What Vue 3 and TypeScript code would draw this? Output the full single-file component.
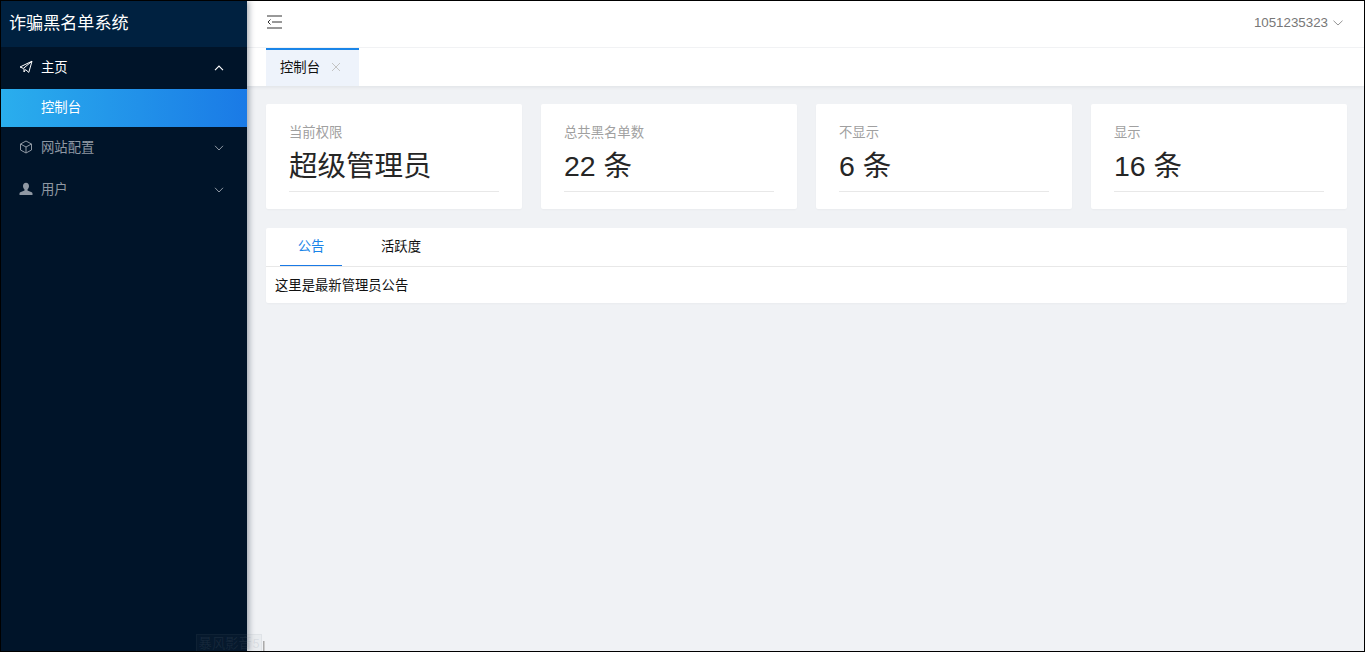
<script setup lang="ts">
const stats = [
  { label: '当前权限', value: '超级管理员' },
  { label: '总共黑名单数', value: '22 条' },
  { label: '不显示', value: '6 条' },
  { label: '显示', value: '16 条' },
]
</script>

<template>
  <div class="app">
    <aside class="side">
      <div class="logo">诈骗黑名单系统</div>
      <div class="item on">
        <svg class="ico" viewBox="0 0 14 14" fill="none" stroke="currentColor" stroke-width="1"><path d="M13 1.2 1 7l3.4 1.4L13 1.2 9.8 12.4 6.5 9.6 5 12V8.6" stroke-linejoin="round" /></svg>
        <span>主页</span>
        <svg class="arrow" viewBox="0 0 10 6" fill="none" stroke="currentColor" stroke-width="1.1"><path d="M1 5.2 5 1l4 4.2" /></svg>
      </div>
      <div class="sub">控制台</div>
      <div class="item">
        <svg class="ico" viewBox="0 0 14 14" fill="none" stroke="currentColor" stroke-width="1"><path d="M7 1 12.5 4v6L7 13 1.5 10V4ZM1.5 4 7 7l5.5-3M7 7v6" stroke-linejoin="round" /></svg>
        <span>网站配置</span>
        <svg class="arrow" viewBox="0 0 10 6" fill="none" stroke="currentColor" stroke-width="1"><path d="M1 .8 5 5l4-4.2" /></svg>
      </div>
      <div class="item">
        <svg class="ico" viewBox="0 0 14 14" fill="currentColor"><path d="M7 .8c1.900 0 3 1.400 3 3.200 0 1.500-.7 2.800-1.500 3.400v1.200l4.200 1.700c.5.200.8.600.8 1.100V13H.5v-1.600c0-.5.300-.9.800-1.100l4.200-1.700V7.400C4.700 6.800 4 5.500 4 4c0-1.800 1.100-3.200 3-3.200Z" /></svg>
        <span>用户</span>
        <svg class="arrow" viewBox="0 0 10 6" fill="none" stroke="currentColor" stroke-width="1"><path d="M1 .8 5 5l4-4.2" /></svg>
      </div>
    </aside>
    <main class="main">
      <header class="top">
        <div class="head">
          <svg class="fold" viewBox="0 0 15 14" fill="none" stroke="#333" stroke-width="1"><path d="M0 1h15M5 7h10M0 13h15M3.500 4.500 1 7l2.500 2.500" /></svg>
          <div class="user">
            <span>1051235323</span>
            <svg class="caret" viewBox="0 0 10 6" fill="none" stroke="#888" stroke-width=".9"><path d="M.5.700 5 5 9.500.7" /></svg>
          </div>
        </div>
        <div class="tabs">
          <div class="tab">
            <span>控制台</span>
            <svg class="close" viewBox="0 0 10 10" fill="none" stroke="#c4c4c4" stroke-width="1"><path d="m1 1 8 8M9 1 1 9" /></svg>
          </div>
        </div>
      </header>
      <section class="content">
        <div class="cards">
          <div v-for="s in stats" :key="s.label" class="card">
            <div class="label">{{ s.label }}</div>
            <div class="value">{{ s.value }}</div>
          </div>
        </div>
        <div class="panel">
          <div class="ptabs">
            <div class="ptab active">公告</div>
            <div class="ptab">活跃度</div>
          </div>
          <div class="pbody">这里是最新管理员公告</div>
        </div>
      </section>
    </main>
    <div class="mark">暴风影音5</div>
    <div class="tick"></div>
  </div>
</template>

<style>
html, body { margin: 0; background: #f0f2f5; }
</style>

<style scoped>
.app {
  position: relative;
  box-sizing: border-box;
  width: 1365px;
  height: 652px;
  border: 1px solid #000;
  display: flex;
  overflow: hidden;
  background: #f0f2f5;
  font-family: Roboto, "Noto Sans CJK SC", sans-serif;
  font-size: 13.33px;
}
.side {
  width: 246px;
  flex: none;
  background: #001429;
  position: relative;
  z-index: 2;
  box-shadow: 2px 0 6px rgba(0, 21, 41, 0.35);
}
.logo {
  height: 46px;
  line-height: 44px;
  padding-left: 8px;
  background: #002140;
  color: #fff;
  font-size: 17.1px;
}
.item {
  height: 42px;
  display: flex;
  align-items: center;
  padding-left: 18px;
  color: #8f98a3;
}
.item.on { color: #fff; }
.item span { margin-left: 8px; padding-bottom: 4px; }
.ico { width: 14px; height: 14px; flex: none; margin-bottom: 2px; }
.arrow { width: 10px; height: 6px; margin-left: auto; margin-right: 23px; }
.sub {
  height: 38px;
  line-height: 38px;
  padding-left: 40px;
  color: #fff;
  background: linear-gradient(90deg, #2aaeed, #1a7ae6);
}
.main {
  flex: 1;
  min-width: 0;
  display: flex;
  flex-direction: column;
}
.top {
  background: #fff;
  box-shadow: 0 1px 4px rgba(0, 21, 41, 0.08);
}
.head {
  height: 46px;
  display: flex;
  align-items: center;
  justify-content: space-between;
  padding: 0 21px 0 20px;
  border-bottom: 1px solid #f1f2f4;
}
.fold { width: 15px; height: 14px; margin-bottom: 5px; }
.user {
  display: flex;
  align-items: center;
  gap: 5px;
  color: #777;
  font-family: "Liberation Sans", sans-serif;
  padding-bottom: 3px;
}
.caret { width: 10px; height: 6px; }
.tabs {
  height: 38px;
  padding-left: 19px;
}
.tab {
  box-sizing: border-box;
  width: 93px;
  height: 38px;
  display: flex;
  align-items: center;
  padding: 0 0 4px 14px;
  background: #eef3fb;
  border-top: 2px solid #1a85e8;
  color: #111;
}
.close { width: 10px; height: 10px; margin-left: 11px; margin-top: 1px; }
.content {
  flex: 1;
  padding: 18px 17px 0 19px;
}
.cards {
  display: grid;
  grid-template-columns: repeat(4, 256px);
  column-gap: 19px;
}
.card {
  box-sizing: border-box;
  height: 105px;
  padding: 19px 23px 0;
  background: #fff;
  border-radius: 2px;
  box-shadow: 0 1px 2px rgba(0, 0, 0, 0.03);
}
.label {
  color: #a0a0a0;
  line-height: 20px;
}
.value {
  height: 48px;
  line-height: 47px;
  font-size: 28.5px;
  color: #262626;
  font-family: "Liberation Sans", "Noto Sans CJK SC", sans-serif;
  border-bottom: 1px solid #e8e8e8;
}
.panel {
  margin-top: 19px;
  height: 75px;
  background: #fff;
  border-radius: 2px;
  box-shadow: 0 1px 2px rgba(0, 0, 0, 0.03);
}
.ptabs {
  height: 38px;
  display: flex;
  padding-left: 14px;
  border-bottom: 1px solid #e8e8e8;
}
.ptab {
  box-sizing: border-box;
  height: 38px;
  width: 62px;
  line-height: 38px;
  text-align: center;
  color: #111;
}
.ptab + .ptab { margin-left: 8px; width: 102px; }
.ptab.active {
  color: #1a85e8;
  border-bottom: 1px solid #1a7ae6;
}
.pbody {
  padding-left: 9px;
  line-height: 38px;
  color: #111;
}
.mark {
  box-sizing: border-box;
  position: absolute;
  left: 195px;
  top: 633px;
  width: 66px;
  height: 20px;
  text-align: center;
  line-height: 18px;
  color: rgba(120, 130, 145, 0.14);
  background: rgba(120, 130, 145, 0.05);
  border: 1px solid rgba(120, 130, 145, 0.08);
  font-size: 13.33px;
  z-index: 3;
}
.tick {
  position: absolute;
  left: 262px;
  top: 640px;
  width: 2px;
  height: 10px;
  background: linear-gradient(90deg, #999, #ddd);
  z-index: 3;
}
</style>
